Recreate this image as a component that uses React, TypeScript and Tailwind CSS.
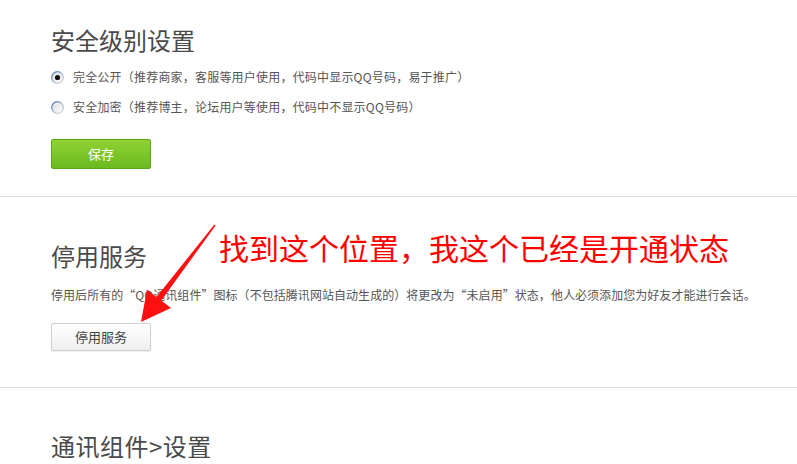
import React from "react";

const font = { fontFamily: '"Noto Sans CJK SC", "Noto Sans", sans-serif' };

function Radio({ checked }: { checked: boolean }) {
  return (
    <svg width="13" height="13" viewBox="0 0 13 13" className="shrink-0">
      <defs>
        <linearGradient id={checked ? "rg1" : "rg2"} x1="0" y1="0" x2="1" y2="1">
          <stop offset="0" stopColor="#3a6fb8" />
          <stop offset="0.5" stopColor="#9fb4cc" />
          <stop offset="1" stopColor="#e0e0e0" />
        </linearGradient>
        <linearGradient id={checked ? "rf1" : "rf2"} x1="0" y1="0" x2="1" y2="1">
          <stop offset="0" stopColor="#dcdcdc" />
          <stop offset="1" stopColor="#ffffff" />
        </linearGradient>
      </defs>
      <circle cx="6.5" cy="6.5" r="5.8" fill={`url(#${checked ? "rf1" : "rf2"})`} stroke={`url(#${checked ? "rg1" : "rg2"})`} strokeWidth="1.3" />
      {checked && <circle cx="6.5" cy="6.5" r="2.6" fill="#111" />}
    </svg>
  );
}

export default function App() {
  return (
    <div className="relative w-[797px] h-[464px] overflow-hidden bg-white" style={font}>
      {/* Section 1 */}
      <div className="pl-[51px] pt-[22px] pb-[27px] border-b border-[#dcdcdc]">
        <div className="text-[24px] leading-[36px] text-[#4a4a4a]">安全级别设置</div>
        <div className="mt-[10px] flex items-center h-[18px] gap-[9px] text-[12px] text-[#555] tracking-[0.2px]">
          <Radio checked />
          <span>完全公开（推荐商家，客服等用户使用，代码中显示QQ号码，易于推广）</span>
        </div>
        <div className="mt-[12px] flex items-center h-[18px] gap-[9px] text-[12px] text-[#555] tracking-[0.2px]">
          <Radio checked={false} />
          <span>安全加密（推荐博主，论坛用户等使用，代码中不显示QQ号码）</span>
        </div>
        <button className="mt-[23px] flex items-center justify-center w-[100px] h-[30px] rounded-[2px] border border-[#5aa61c] bg-gradient-to-b from-[#8fd233] to-[#6abb20] text-[13px] text-white">
          保存
        </button>
      </div>

      {/* Section 2 */}
      <div className="pl-[51px] pt-[41px] pb-[36px] border-b border-[#dcdcdc]">
        <div className="text-[24px] leading-[36px] text-[#4a4a4a]">停用服务</div>
        <div className="mt-[12px] h-[18px] leading-[18px] text-[12px] text-[#555] whitespace-nowrap tracking-[0.05px]">
          停用后所有的“QQ通讯组件”图标（不包括腾讯网站自动生成的）将更改为“未启用”状态，他人必须添加您为好友才能进行会话。
        </div>
        <button className="mt-[19px] flex items-center justify-center w-[100px] h-[28px] rounded-[2px] border border-[#cfcfcf] bg-gradient-to-b from-[#ffffff] to-[#eeeeee] text-[13px] text-[#444] shadow-[0_1px_1px_rgba(0,0,0,0.08)]">
          停用服务
        </button>
      </div>

      {/* Section 3 */}
      <div className="pl-[51px] pt-[40px]">
        <div className="text-[24px] leading-[36px] text-[#4a4a4a] tracking-[0.5px]">通讯组件&gt;设置</div>
      </div>

      {/* Annotation */}
      <div className="absolute left-[219px] top-[232px] text-[30px] leading-[30px] text-[#ff0000] whitespace-nowrap">
        找到这个位置，我这个已经是开通状态
      </div>
      <svg className="absolute left-0 top-0 pointer-events-none" width="797" height="464" viewBox="0 0 797 464">
        <polygon
          points="214.4,224.6 215.6,225.6 161.3,300.5 171,308 141,322 147,289.5 156.5,296.9"
          fill="#ff1010"
        />
      </svg>
    </div>
  );
}
